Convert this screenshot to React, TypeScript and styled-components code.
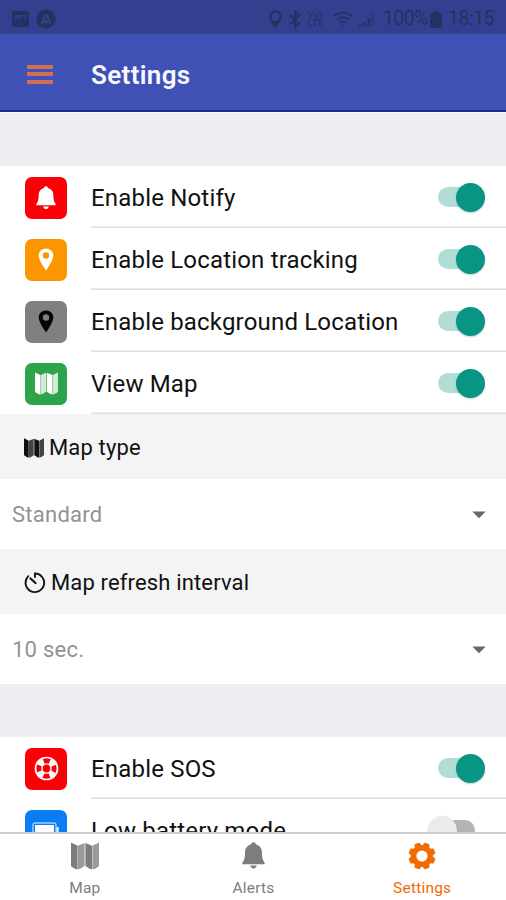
import React from "react";
import styled, { createGlobalStyle } from "styled-components";

const GlobalStyle = createGlobalStyle`
  * { box-sizing: border-box; }
  body { margin: 0; background: #fff; font-family: Roboto, "Liberation Sans", sans-serif; }
  svg { display: block; flex: none; }
`;

const Screen = styled.div`
  width: 506px;
  height: 900px;
  display: flex;
  flex-direction: column;
  overflow: hidden;
`;

const StatusBar = styled.div`
  height: 34px;
  flex: none;
  display: flex;
  align-items: center;
  padding: 4px 12px 0 12px;
  background: #34408f;
  color: #263163;
`;

const StatusGroup = styled.div<{ $end?: boolean }>`
  display: flex;
  align-items: center;
  gap: ${(p) => (p.$end ? 0 : 7)}px;
  margin-left: ${(p) => (p.$end ? "auto" : "0")};
`;

const StatusSlot = styled.div<{ $w: number }>`
  width: ${(p) => p.$w}px;
  flex: none;
`;

const Volte = styled.div`
  width: 25px;
  flex: none;
  font-size: 8.5px;
  line-height: 8.5px;
  font-weight: 500;
  letter-spacing: 0.6px;
`;

const StatusText = styled.span<{ $w: number; $track?: number }>`
  width: ${(p) => p.$w}px;
  flex: none;
  font-size: 19.5px;
  line-height: 24px;
  white-space: nowrap;
  letter-spacing: ${(p) => p.$track ?? 0}px;
`;

const Header = styled.header`
  height: 78px;
  flex: none;
  display: flex;
  align-items: center;
  padding: 4px 27px 0;
  gap: 38px;
  background: #4051b5;
  border-bottom: 2px solid #1a2c91;
`;

const MenuButton = styled.button`
  width: 26px;
  height: 19px;
  padding: 0;
  border: 0;
  background: none;
  display: flex;
  flex-direction: column;
  justify-content: space-between;
`;

const MenuBar = styled.span`
  height: 4px;
  width: 26px;
  background: #cf7054;
`;

const Title = styled.h1`
  margin: 0;
  padding-top: 2px;
  color: #f5f8ff;
  font-size: 26px;
  line-height: 32px;
  font-weight: 600;
  letter-spacing: 0.35px;
`;

const Content = styled.main`
  flex: 1;
  min-height: 0;
  overflow: hidden;
`;

const Gap = styled.div<{ $first?: boolean }>`
  height: ${(p) => (p.$first ? 54 : 53)}px;
  border-top: ${(p) => (p.$first ? "1px solid #fbfbff" : "0")};
  background: #eeeef3;
`;

const Row = styled.div<{ $fg: string }>`
  height: 62px;
  display: flex;
  padding-left: 25px;
  align-items: center;
  background: #fff;
  color: ${(p) => p.$fg};
`;

const Tile = styled.div<{ $bg: string }>`
  width: 42px;
  height: 42px;
  margin-top: 1px;
  flex: none;
  border-radius: 7px;
  background: ${(p) => p.$bg};
  display: flex;
  align-items: center;
  justify-content: center;
`;

const RowBody = styled.div`
  margin-left: 24px;
  flex: 1;
  height: 62px;
  display: flex;
  align-items: center;
  justify-content: space-between;
  padding-top: 2px;
  background: linear-gradient(#dedede, #dedede) 0 61px / 100% 1px no-repeat,
    linear-gradient(#ececec, #ececec) 0 60px / 100% 1px no-repeat;
`;

const RowLabel = styled.span`
  color: #111;
  font-size: 24px;
  line-height: 32px;
  white-space: nowrap;
  letter-spacing: 0.18px;
`;

const Track = styled.div<{ $on: boolean }>`
  width: 46px;
  height: 20px;
  margin-right: ${(p) => (p.$on ? 22 : 31)}px;
  margin-bottom: 2px;
  border-radius: 10px;
  background: ${(p) => (p.$on ? "#b0ded7" : "#b4b4b4")};
  display: flex;
  align-items: center;
  justify-content: ${(p) => (p.$on ? "flex-end" : "flex-start")};
`;

const Thumb = styled.div<{ $on: boolean }>`
  width: 29px;
  height: 29px;
  flex: none;
  margin: ${(p) => (p.$on ? "0 -1px 0 0" : "0 0 0 -1px")};
  border-radius: 50%;
  background: ${(p) => (p.$on ? "#089584" : "#ebebeb")};
  box-shadow: 0 1px 2px rgba(0, 0, 0, 0.2);
`;

const SectionLabel = styled.div`
  height: 65px;
  display: flex;
  align-items: center;
  gap: 5px;
  padding: 2px 0 0 24px;
  background: #f4f4f4;
  color: #111;
  font-size: 22px;
  line-height: 30px;
  letter-spacing: 0.15px;
`;

const Picker = styled.div`
  height: 70px;
  display: flex;
  align-items: center;
  justify-content: space-between;
  padding: 2px 20px 0 12px;
  background: #fff;
  color: #929292;
  font-size: 22px;
  line-height: 30px;
  letter-spacing: 0.25px;
`;

const TabBar = styled.nav`
  height: 68px;
  flex: none;
  display: grid;
  grid-template-columns: repeat(3, 1fr);
  background: #fff;
  border-top: 2px solid #cfcfcf;
`;

const Tab = styled.div<{ $active?: boolean }>`
  display: flex;
  flex-direction: column;
  align-items: center;
  padding: 8px 0 0 1px;
  color: ${(p) => (p.$active ? "#f06a05" : "#7d7d7d")};
`;

const TabIcon = styled.div`
  height: 36px;
`;

const TabLabel = styled.span`
  font-size: 15.5px;
  line-height: 20px;
  letter-spacing: 0.2px;
`;

function MapIcon({ size }: { size: number }) {
  return (
    <svg width={size} height={size} viewBox="0 0 28 28" fill="currentColor">
      <path d="M0 .5 6.600 3.800V27.300Q5.400 27.500 4.300 26.900L1 25Q0 24.400 0 23.200z" />
      <path d="M7 3.800 13.600 1V24L9.700 26.500Q8.400 27.300 7 27.300z" opacity="0.78" />
      <path d="M14.400 1 21 3.800V27.300Q19.600 27.300 18.300 26.500L14.400 24z" />
      <path d="M21.400 3.800 28 .5V23.200Q28 24.400 27 25L23.700 26.900Q22.600 27.500 21.400 27.300z" opacity="0.78" />
    </svg>
  );
}

function BellIcon({ size }: { size: number }) {
  return (
    <svg width={size} height={size * 1.18} viewBox="0 0 22 26" fill="currentColor">
      <path d="M11 .3c1.300 0 2 .7 2.100 1.800 4 1 5.900 4 6 7.700.1 4.400.4 6.600 1.500 8.500.8 1.200 1.200 1.700 1.200 3H.2c0-1.300.4-1.800 1.200-3 1.100-1.900 1.400-4.100 1.500-8.500.1-3.700 2-6.700 6-7.700C9 1 9.700.3 11 .3z" />
      <path d="M8 22.600h6c-.3 1.800-1.400 2.800-3 2.800s-2.700-1-3-2.800z" />
    </svg>
  );
}

function PinIcon({ hole }: { hole: string }) {
  return (
    <svg width="16" height="23" viewBox="0 0 16 23">
      <path d="M8 .5C3.800.5.7 3.600.7 7.500.7 12.500 8 22.500 8 22.500S15.300 12.500 15.300 7.500C15.300 3.600 12.200.5 8 .5z" fill="currentColor" />
      <circle cx="8" cy="7.500" r="3.200" fill={hole} />
    </svg>
  );
}

function BuoyIcon() {
  return (
    <svg width="25" height="25" viewBox="0 0 25 25" fill="none">
      <circle cx="12.500" cy="12.500" r="11" stroke="#fff" strokeWidth="1.700" />
      <circle cx="12.500" cy="12.500" r="7.300" stroke="#fff" strokeWidth="6.400" strokeDasharray="5.600 5.867" strokeDashoffset="2.800" transform="rotate(45 12.500 12.500)" />
      <circle cx="12.500" cy="12.500" r="4.600" stroke="#fff" strokeWidth="1.400" />
    </svg>
  );
}

function BatteryIcon() {
  return (
    <svg width="28" height="18" viewBox="0 0 28 18" fill="none">
      <rect x="1" y="1" width="23" height="16" rx="2" stroke="#9fd2ff" strokeWidth="1.400" />
      <rect x="3" y="3" width="19" height="12" fill="#fff" />
      <path d="M25.500 5v8" stroke="#d5ebff" strokeWidth="2.500" />
    </svg>
  );
}

function TimerIcon() {
  return (
    <svg width="22" height="22" viewBox="0 0 22 22" fill="none" stroke="#151515" strokeWidth="1.900" strokeLinecap="round">
      <path d="M11 5V1.500A9.300 9.300 0 1 1 4.300 4.200" />
      <path d="M6.500 6.500 11.500 11" strokeWidth="2.300" />
    </svg>
  );
}

function GearIcon() {
  return (
    <svg width="28" height="28" viewBox="0 0 28 28">
      <g fill="currentColor" stroke="currentColor" strokeWidth="1.500" strokeLinejoin="round">
        {[0, 45, 90, 135, 180, 225, 270, 315].map((a) => (
          <path key={a} transform={`rotate(${a + 22.5} 14 14)`} d="M10.500 5.500 12 1.200h4l1.500 4.300z" />
        ))}
      </g>
      <circle cx="14" cy="14" r="8.300" fill="none" stroke="currentColor" strokeWidth="5.400" />
    </svg>
  );
}

function CaretIcon() {
  return (
    <svg width="14" height="8" viewBox="0 0 14 8">
      <path d="M.3.500H13.700L7 7.300z" fill="#696969" />
    </svg>
  );
}

function Toggle({ on }: { on: boolean }) {
  return (
    <Track $on={on} role="switch" aria-checked={on}>
      <Thumb $on={on} />
    </Track>
  );
}

function SettingRow({ bg, fg = "#fff", icon, label, on = true }: {
  bg: string; fg?: string; icon: React.ReactNode; label: string; on?: boolean;
}) {
  return (
    <Row $fg={fg}>
      <Tile $bg={bg}>{icon}</Tile>
      <RowBody>
        <RowLabel>{label}</RowLabel>
        <Toggle on={on} />
      </RowBody>
    </Row>
  );
}

export default function App() {
  return (
    <Screen>
      <GlobalStyle />
      <StatusBar>
        <StatusGroup>
          <svg width="17" height="16" viewBox="0 0 17 16">
            <rect width="17" height="16" rx="2" fill="currentColor" />
            <path d="M3 11V4h11v4l-3-3-4 4-2-2z" fill="#34408f" opacity=".75" />
          </svg>
          <svg width="20" height="20" viewBox="0 0 20 20">
            <circle cx="10" cy="10" r="9.700" fill="currentColor" />
            <path d="M5.800 14.500 9 6.500Q10 5 11 6.500L14.200 14.500M8.300 14 10 11.500 11.700 14" stroke="#394682" strokeWidth="1.700" fill="none" />
          </svg>
        </StatusGroup>
        <StatusGroup $end>
          <StatusSlot $w={20}>
            <svg width="13" height="18" viewBox="0 0 13 18">
              <path d="M6.500 1.300a5 5 0 0 0-5.100 5c0 3.500 5.100 9.900 5.100 9.900s5.100-6.400 5.100-9.900a5 5 0 0 0-5.100-5z" fill="none" stroke="currentColor" strokeWidth="2.400" />
              <path d="M3.500 11h6l-3 5z" fill="currentColor" />
            </svg>
          </StatusSlot>
          <StatusSlot $w={19}>
            <svg width="12" height="19" viewBox="0 0 12 19" fill="none" stroke="currentColor" strokeWidth="2">
              <path d="M1 5 10 13.500 6 17.500V1.500L10 5.500 1 14" />
            </svg>
          </StatusSlot>
          <Volte>Vo)<br />LTE</Volte>
          <StatusSlot $w={26}>
            <svg width="20" height="17" viewBox="0 0 20 17" fill="none" stroke="currentColor" strokeWidth="1.800">
              <path d="M1 5Q10-2 19 5M4 8.500q6-4.500 12 0M7 12q3-2.500 6 0" />
              <path d="M8.500 14h3L10 16z" fill="currentColor" stroke="none" />
            </svg>
          </StatusSlot>
          <StatusSlot $w={24}>
            <svg width="16" height="16" viewBox="0 0 17 16" fill="currentColor" opacity=".85">
              <path d="M0 13h3v3H0zM4.500 11h3v5h-3zM9 7h3v9H9z" />
              <path d="M13.500 1h3v15h-3z" opacity=".4" />
            </svg>
          </StatusSlot>
          <StatusText $w={47} $track={-0.6}>100%</StatusText>
          <StatusSlot $w={18}>
            <svg width="12" height="17" viewBox="0 0 12 17" fill="currentColor">
              <path d="M3.500 0h5v2H11q1 0 1 1v13q0 1-1 1H1q-1 0-1-1V3q0-1 1-1h2.500z" />
            </svg>
          </StatusSlot>
          <StatusText $w={46} $track={-0.5}>18:15</StatusText>
        </StatusGroup>
      </StatusBar>
      <Header>
        <MenuButton aria-label="Menu"><MenuBar /><MenuBar /><MenuBar /></MenuButton>
        <Title>Settings</Title>
      </Header>
      <Content>
        <Gap $first />
        <SettingRow bg="#fb0006" icon={<BellIcon size={20} />} label="Enable Notify" />
        <SettingRow bg="#fb9600" icon={<PinIcon hole="#fb9600" />} label="Enable Location tracking" />
        <SettingRow bg="#808080" fg="#050505" icon={<PinIcon hole="#808080" />} label="Enable background Location" />
        <SettingRow bg="#2ea44a" icon={<MapIcon size={23} />} label="View Map" />
        <SectionLabel><MapIcon size={20} />Map type</SectionLabel>
        <Picker>Standard<CaretIcon /></Picker>
        <SectionLabel><TimerIcon />Map refresh interval</SectionLabel>
        <Picker>10 sec.<CaretIcon /></Picker>
        <Gap />
        <SettingRow bg="#fb0006" icon={<BuoyIcon />} label="Enable SOS" />
        <SettingRow bg="#0a7df5" icon={<BatteryIcon />} label="Low battery mode" on={false} />
      </Content>
      <TabBar>
        <Tab><TabIcon><MapIcon size={28} /></TabIcon><TabLabel>Map</TabLabel></Tab>
        <Tab><TabIcon><BellIcon size={23} /></TabIcon><TabLabel>Alerts</TabLabel></Tab>
        <Tab $active><TabIcon><GearIcon /></TabIcon><TabLabel>Settings</TabLabel></Tab>
      </TabBar>
    </Screen>
  );
}
